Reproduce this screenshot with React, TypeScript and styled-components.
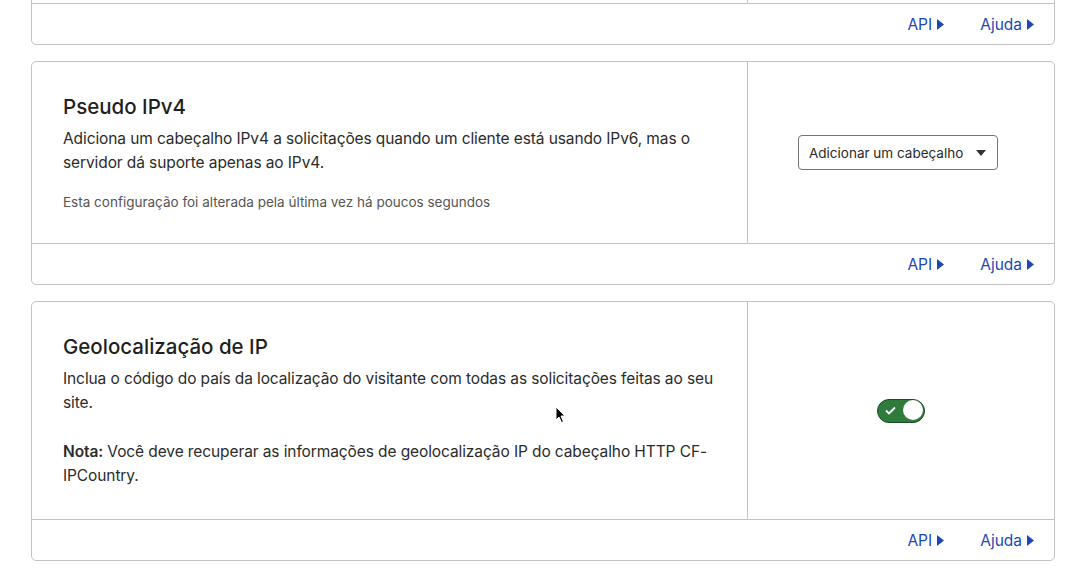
import React from 'react';
import styled, { createGlobalStyle } from 'styled-components';

const GlobalStyle = createGlobalStyle`
  html, body {
    margin: 0;
    padding: 0;
    background: #ffffff;
    font-family: Inter, "Noto Sans", "Liberation Sans", sans-serif;
    color: #222;
  }
  * { box-sizing: border-box; }
`;

const Page = styled.div`
  position: relative;
  padding: 0 17px 0 31px;
  display: flex;
  flex-direction: column;
  gap: 16px;
  overflow: hidden;
  height: 577px;
`;

// the first card is scrolled mostly out of view
const Card = styled.section<{ $cut?: boolean }>`
  width: 1024px;
  border: 1px solid #c2c2c2;
  border-radius: 5px;
  background: #fff;
  margin-top: ${(p) => (p.$cut ? '-60px' : '0')};
`;

const Main = styled.div`
  display: grid;
  grid-template-columns: 716px 1fr;
`;

const Info = styled.div`
  border-right: 1px solid #c2c2c2;
  padding: 31px 32px 31px 31px;
  min-height: 62px;
  display: flex;
  flex-direction: column;
  justify-content: center;
`;

const Control = styled.div`
  display: flex;
  align-items: center;
  justify-content: center;
`;

const Title = styled.h3`
  margin: 0 0 6px;
  font-size: 20.5px;
  line-height: 28px;
  font-weight: 500;
  color: #1f1f1f;
`;

const Text = styled.p<{ $gap?: number }>`
  margin: ${(p) => (p.$gap ? `${p.$gap}px` : '0')} 0 0;
  font-size: 15.5px;
  line-height: 24px;
  color: #2b2b2b;
  letter-spacing: -0.1px;
  b { font-weight: 600; }
`;

const Meta = styled.p`
  margin: 17px 0 0;
  font-size: 13.5px;
  line-height: 20px;
  color: #555;
`;

const Footer = styled.div`
  border-top: 1px solid #c2c2c2;
  height: 41px;
  display: flex;
  align-items: center;
  justify-content: flex-end;
  gap: 36px;
  padding-right: 20px;
`;

const Link = styled.a`
  display: flex;
  align-items: center;
  gap: 5px;
  font-size: 15.5px;
  color: #1d47b2;
  text-decoration: none;
  cursor: pointer;
`;

const Select = styled.div`
  width: 200px;
  height: 35px;
  margin-right: 6px;
  border: 1px solid #757575;
  border-radius: 4px;
  display: flex;
  align-items: center;
  justify-content: space-between;
  padding: 0 11px 0 10px;
  font-size: 13.5px;
  color: #2a2a2a;
`;

const Caret = styled.span`
  width: 0;
  height: 0;
  border-left: 5px solid transparent;
  border-right: 5px solid transparent;
  border-top: 6px solid #333;
`;

const Toggle = styled.div<{ $on?: boolean }>`
  position: relative;
  width: 48px;
  height: 24px;
  border-radius: 12px;
  background: ${(p) => (p.$on ? '#2e7b3b' : '#ccc')};
  border: 1.5px solid #1d4a25;
  display: flex;
  align-items: center;
  padding-left: 7px;
`;

const Knob = styled.span`
  position: absolute;
  right: 1px;
  top: 0.5px;
  width: 20px;
  height: 20px;
  border-radius: 50%;
  background: #fff;
`;

const Cursor = styled.svg`
  position: absolute;
  left: 555px;
  top: 406px;
`;

const Arrow = () => (
  <svg width="7" height="11" viewBox="0 0 7 11">
    <path d="M0 0 L7 5.5 L0 11 Z" fill="#1d47b2" />
  </svg>
);

const Links = () => (
  <Footer>
    <Link>API <Arrow /></Link>
    <Link>Ajuda <Arrow /></Link>
  </Footer>
);

export default function App() {
  return (
    <>
      <GlobalStyle />
      <Page>
        <Card $cut>
          <Main>
            <Info />
            <Control />
          </Main>
          <Links />
        </Card>

        <Card>
          <Main>
            <Info>
              <Title>Pseudo IPv4</Title>
              <Text>
                Adiciona um cabeçalho IPv4 a solicitações quando um cliente está usando IPv6, mas o
                servidor dá suporte apenas ao IPv4.
              </Text>
              <Meta>Esta configuração foi alterada pela última vez há poucos segundos</Meta>
            </Info>
            <Control>
              <Select>
                Adicionar um cabeçalho
                <Caret />
              </Select>
            </Control>
          </Main>
          <Links />
        </Card>

        <Card>
          <Main>
            <Info>
              <Title>Geolocalização de IP</Title>
              <Text>
                Inclua o código do país da localização do visitante com todas as solicitações feitas ao seu
                site.
              </Text>
              <Text $gap={25}>
                <b>Nota:</b> Você deve recuperar as informações de geolocalização IP do cabeçalho HTTP CF-IPCountry.
              </Text>
            </Info>
            <Control>
              <Toggle $on>
                <svg width="11" height="9" viewBox="0 0 11 9">
                  <path d="M1 4.5 L4 7.5 L10 1.5" stroke="#fff" strokeWidth="1.8" fill="none" />
                </svg>
                <Knob />
              </Toggle>
            </Control>
          </Main>
          <Links />
        </Card>

        <Cursor width="12" height="18" viewBox="0 0 12 18">
          <path d="M1 1 L1 14 L4 11 L6.5 16.5 L8.5 15.5 L6 10 L10 10 Z" fill="#000" stroke="#fff" strokeWidth="1" />
        </Cursor>
      </Page>
    </>
  );
}
